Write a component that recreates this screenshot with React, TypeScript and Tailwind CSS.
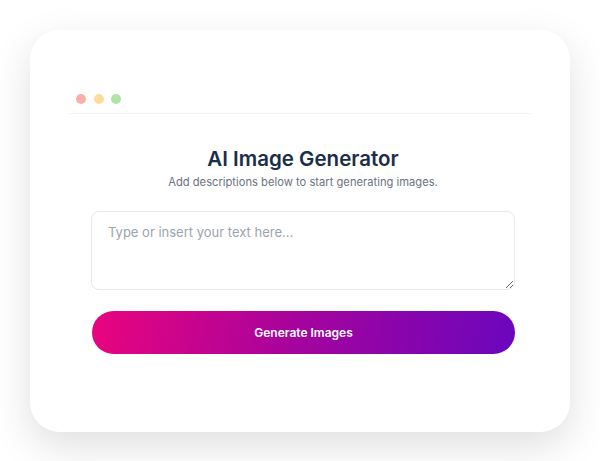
import React from "react";

export default function App() {
  return (
    <div className="w-[600px] h-[461px] bg-white pt-[30px] pl-[30px]" style={{ fontFamily: "Inter, 'Noto Sans', sans-serif" }}>
      <div className="w-[540px] h-[402px] bg-white rounded-[30px] shadow-[0_14px_40px_rgba(0,0,0,0.13)] pt-[63px] px-[39px]">
        <div className="flex items-center gap-[7.5px] pl-[7px] h-[11px]">
          <span className="w-[10px] h-[10px] rounded-full bg-[#f8b0aa]" />
          <span className="w-[10px] h-[10px] rounded-full bg-[#fddb9b]" />
          <span className="w-[10px] h-[10px] rounded-full bg-[#aee4a4]" />
        </div>
        <div className="mt-[9px] h-px bg-[#f3f4f6]" />
        <div className="pl-[22px] pr-[16px]">
          <h1 className="mt-[33px] text-center text-[20.5px] leading-[24px] font-semibold text-[#1a2d4b]">AI Image Generator</h1>
          <p className="mt-[3px] text-center text-[11.2px] leading-[16px] text-[#6b7280]">Add descriptions below to start generating images.</p>
          <textarea
            className="mt-[21px] block w-[424px] h-[79px] rounded-[8px] border border-[#e8e8ea] px-[16px] py-[11px] text-[13px] leading-[18px] text-[#374151] placeholder:text-[#9ca3af] outline-none"
            placeholder="Type or insert your text here..."
          />
          <button className="mt-[21px] ml-[1px] w-[423px] h-[43px] rounded-full bg-[linear-gradient(100deg,#ea047e_0%,#a3039e_50%,#6b06bd_100%)] text-white text-[12px] font-semibold">
            Generate Images
          </button>
        </div>
      </div>
    </div>
  );
}
